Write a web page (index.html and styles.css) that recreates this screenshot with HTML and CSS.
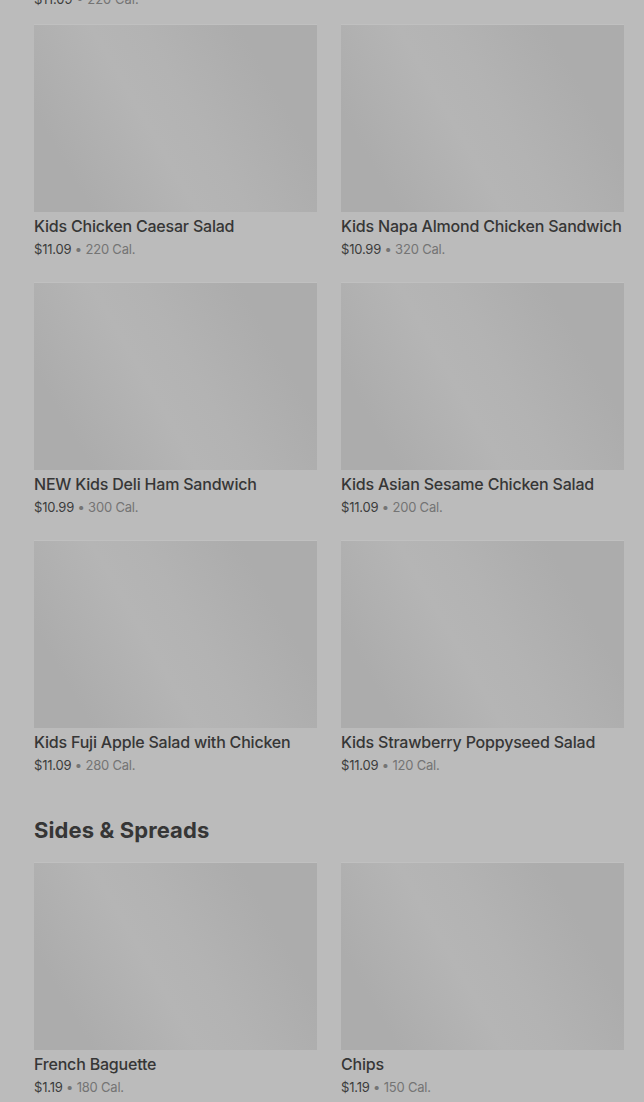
FILE: index.html
```html
<!DOCTYPE html>
<html lang="en">
<head>
    <meta charset="UTF-8">
    <meta name="viewport" content="width=device-width, initial-scale=1.0">
    <title>Menu</title>
    <link rel="stylesheet" href="styles.css">
</head>
<body>
    <div class="menu">
        <div class="cut"><span class="price">$11.09</span> &bull; <span class="cal">220 Cal.</span></div>

        <div class="grid">
            <div class="card">
                <div class="pic"></div>
                <h3>Kids Chicken Caesar Salad</h3>
                <p><span class="price">$11.09</span> &bull; 220 Cal.</p>
            </div>
            <div class="card">
                <div class="pic"></div>
                <h3>Kids Napa Almond Chicken Sandwich</h3>
                <p><span class="price">$10.99</span> &bull; 320 Cal.</p>
            </div>
            <div class="card">
                <div class="pic"></div>
                <h3>NEW Kids Deli Ham Sandwich</h3>
                <p><span class="price">$10.99</span> &bull; 300 Cal.</p>
            </div>
            <div class="card">
                <div class="pic"></div>
                <h3>Kids Asian Sesame Chicken Salad</h3>
                <p><span class="price">$11.09</span> &bull; 200 Cal.</p>
            </div>
            <div class="card">
                <div class="pic"></div>
                <h3>Kids Fuji Apple Salad with Chicken</h3>
                <p><span class="price">$11.09</span> &bull; 280 Cal.</p>
            </div>
            <div class="card">
                <div class="pic"></div>
                <h3>Kids Strawberry Poppyseed Salad</h3>
                <p><span class="price">$11.09</span> &bull; 120 Cal.</p>
            </div>
        </div>

        <h2>Sides &amp; Spreads</h2>

        <div class="grid">
            <div class="card">
                <div class="pic"></div>
                <h3>French Baguette</h3>
                <p><span class="price">$1.19</span> &bull; 180 Cal.</p>
            </div>
            <div class="card">
                <div class="pic"></div>
                <h3>Chips</h3>
                <p><span class="price">$1.19</span> &bull; 150 Cal.</p>
            </div>
        </div>
    </div>
</body>
</html>
```

FILE: styles.css
```css
/* page sits behind a dimmed overlay */
body {
    margin: 0;
    background-color: #bbbbbb;
    font-family: Inter, "Liberation Sans", sans-serif;
    color: #333;
    overflow: hidden;
}

.menu {
    padding: 0 20px 0 34px;
}

.cut {
    margin-top: -11px;
    margin-bottom: 16px;
    font-size: 13px;
    line-height: 20px;
    color: #747474;
}

.grid {
    display: grid;
    grid-template-columns: 283px 283px;
    column-gap: 24px;
    row-gap: 24px;
}

.pic {
    height: 187px;
    background-color: #aeaeae;
    background-image: linear-gradient(60deg, #acacac 15%, #b5b5b5 42%, #b3b3b3 55%, #acacac 80%);
    box-shadow: 0 -1px 0 #c0c0c0;
}

.card h3 {
    margin: 3px 0 0;
    font-size: 16px;
    font-weight: 500;
    line-height: 22px;
    color: #363636;
    white-space: nowrap;
    letter-spacing: -0.2px;
}

.card p {
    margin: 2px 0 0;
    font-size: 13px;
    line-height: 20px;
    color: #747474;
    letter-spacing: -0.2px;
}

.price {
    color: #3c3c3c;
}

h2 {
    margin: 41px 0 19px;
    font-size: 22px;
    line-height: 28px;
    font-weight: 700;
    color: #363636;
    letter-spacing: 0.1px;
}
```
